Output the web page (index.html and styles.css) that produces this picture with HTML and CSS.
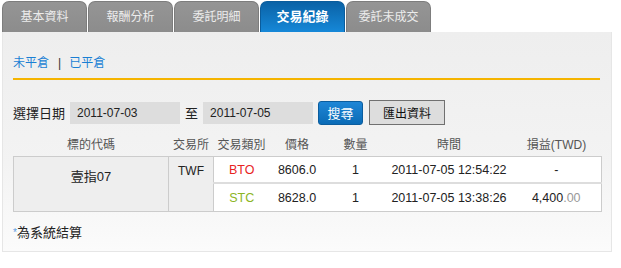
FILE: index.html
```html
<!DOCTYPE html>
<html>
<head>
    <title>交易紀錄</title>
    <link rel="stylesheet" href="styles.css">
</head>
<body>
    <div id="contenedor">
        <ul class="tabs">
            <li class="tab">基本資料</li>
            <li class="tab">報酬分析</li>
            <li class="tab">委託明細</li>
            <li class="tab activo">交易紀錄</li>
            <li class="tab">委託未成交</li>
        </ul>
        <div class="panel">
            <div class="links">
                <a href="#">未平倉</a><span class="sep">|</span><a href="#">已平倉</a>
            </div>
            <form class="filtro">
                <label for="desde">選擇日期</label>
                <input type="text" id="desde" class="fecha" value="2011-07-03" readonly>
                <span class="hasta">至</span>
                <input type="text" id="hasta" class="fecha" value="2011-07-05" readonly>
                <button type="button" class="btn-buscar">搜尋</button>
                <button type="button" class="btn-exportar">匯出資料</button>
            </form>
            <table class="tabla">
                <thead>
                    <tr>
                        <th class="c-codigo">標的代碼</th>
                        <th class="c-bolsa">交易所</th>
                        <th class="c-tipo">交易類別</th>
                        <th class="c-precio">價格</th>
                        <th class="c-cant">數量</th>
                        <th class="c-hora">時間</th>
                        <th class="c-pl">損益(TWD)</th>
                    </tr>
                </thead>
                <tbody>
                    <tr class="fila1">
                        <td class="gris codigo" rowspan="2">壹指07</td>
                        <td class="gris bolsa" rowspan="2">TWF</td>
                        <td class="bto">BTO</td>
                        <td>8606.0</td>
                        <td>1</td>
                        <td>2011-07-05 12:54:22</td>
                        <td>-</td>
                    </tr>
                    <tr class="fila2">
                        <td class="stc">STC</td>
                        <td>8628.0</td>
                        <td>1</td>
                        <td>2011-07-05 13:38:26</td>
                        <td>4,400<span class="dec">.00</span></td>
                    </tr>
                </tbody>
            </table>
            <p class="nota"><span class="ast">*</span>為系統結算</p>
        </div>
    </div>
</body>
</html>
```
FILE: styles.css
```css
body {
    font-family: 'Liberation Sans', 'Noto Sans CJK TC', sans-serif;
    font-size: 12px;
    color: #333333;
    background-color: #ffffff;
    margin: 0;
}
#contenedor {
    width: 610px;
    margin-left: 2px;
}
.tabs {
    display: flex;
    gap: 1px;
    list-style: none;
    margin: 1px 0 0 0;
    padding: 0;
}
.tab {
    width: 85px;
    height: 31px;
    box-sizing: border-box;
    line-height: 30px;
    text-align: center;
    font-size: 12px;
    color: #ececec;
    background: linear-gradient(#959595, #8c8c8c);
    border: 1px solid #7d7d7d;
    border-bottom: none;
    border-radius: 7px 7px 0 0;
}
.tab.activo {
    color: #ffffff;
    font-weight: bold;
    font-size: 13px;
    background: linear-gradient(#0a62a6, #1688d8);
    border-color: #0a5c9c;
}
.panel {
    background: linear-gradient(#eeeeee, #f3f3f3 60%, #fbfbfb);
    border: 1px solid #e6e6e6;
    border-top: none;
    padding: 23px 11px 10px 10px;
}
.links {
    line-height: 16px;
    font-size: 12px;
    padding-bottom: 7px;
    border-bottom: 2px solid #f5b400;
}
.links a {
    color: #1a7fd4;
    text-decoration: none;
}
.sep {
    color: #333333;
    margin: 0 8px 0 9px;
}
.filtro {
    display: flex;
    align-items: center;
    height: 25px;
    margin-top: 20px;
}
.filtro label {
    font-size: 13px;
    color: #222222;
    margin-right: 5px;
}
.fecha {
    width: 110px;
    height: 22px;
    box-sizing: border-box;
    border: none;
    background-color: #dddddd;
    font-family: inherit;
    font-size: 12px;
    color: #222222;
    padding: 0 7px;
}
.hasta {
    font-size: 13px;
    color: #222222;
    margin: 0 5px 0 5px;
}
.btn-buscar {
    width: 45px;
    height: 24px;
    margin-left: 5px;
    font-family: inherit;
    font-size: 13px;
    color: #ffffff;
    background: linear-gradient(#1f86d6, #0a6bb6);
    border: 1px solid #0b5d9e;
    border-radius: 3px;
    padding: 0;
}
.btn-exportar {
    width: 76px;
    height: 25px;
    margin-left: 6px;
    font-family: inherit;
    font-size: 12px;
    color: #111111;
    background-color: #dddddd;
    border: 1px solid #707070;
    padding: 0;
}
.tabla {
    width: 588px;
    margin-top: 5px;
    border-collapse: collapse;
    table-layout: fixed;
}
.tabla th {
    height: 26px;
    padding: 0;
    font-weight: normal;
    color: #555555;
    text-align: center;
}
.c-codigo { width: 155px; }
.c-bolsa { width: 45px; }
.c-tipo { width: 56px; }
.c-precio { width: 55px; }
.c-cant { width: 62px; }
.c-hora { width: 125px; }
.c-pl { width: 90px; }
.tabla td {
    padding: 0;
    text-align: center;
    background-color: #ffffff;
    color: #222222;
    font-size: 12.5px;
}
.fila1 td {
    height: 25px;
    border-top: 1px solid #cccccc;
}
.fila2 td {
    height: 27px;
    border-top: 2px solid #dddddd;
    border-bottom: 1px solid #cccccc;
}
.tabla tbody tr td:last-child {
    border-right: 1px solid #cccccc;
}
.tabla td.gris {
    background-color: #eeeeee;
    border: 1px solid #cccccc;
    vertical-align: top;
    font-weight: normal;
}
.codigo {
    font-size: 13px !important;
    padding-top: 9px !important;
}
.bolsa {
    font-size: 12px !important;
    padding-top: 7px !important;
}
.bto { color: #e8231f !important; }
.stc { color: #8cb524 !important; }
.dec { color: #999999; }
.nota {
    margin: 13px 0 0 0;
    line-height: 16px;
    font-size: 13px;
    color: #222222;
}
.ast {
    color: #5a9be0;
    font-size: 10px;
    vertical-align: top;
}
```
